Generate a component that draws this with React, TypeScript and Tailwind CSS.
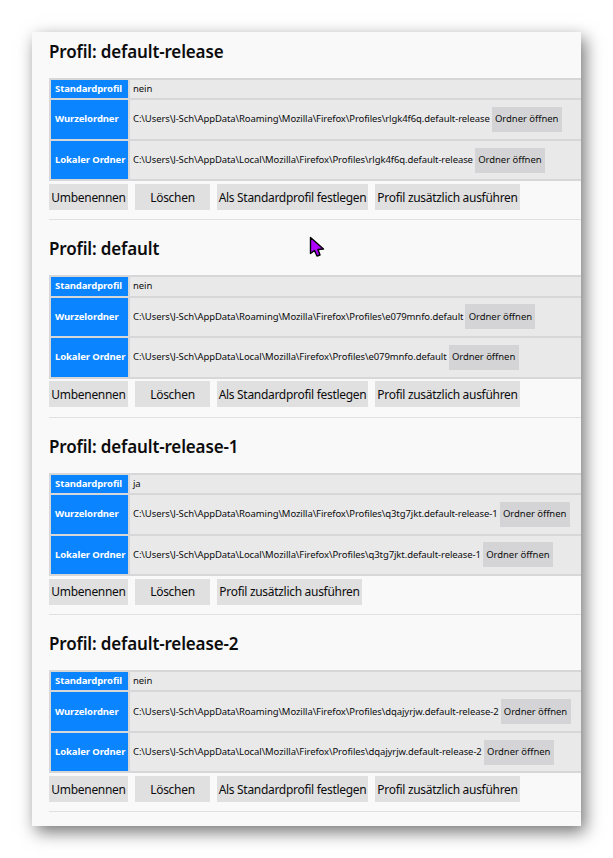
const FONT = "font-['Noto_Sans',sans-serif]";

interface Profile {
  name: string;
  isDefault: boolean;
  folder: string;
}

const PROFILES: Profile[] = [
  { name: "default-release", isDefault: false, folder: "rlgk4f6q.default-release" },
  { name: "default", isDefault: false, folder: "e079mnfo.default" },
  { name: "default-release-1", isDefault: true, folder: "q3tg7jkt.default-release-1" },
  { name: "default-release-2", isDefault: false, folder: "dqajyrjw.default-release-2" },
];

function Row({ label, height, children }: { label: string; height: string; children: React.ReactNode }) {
  return (
    <>
      <div className="flex items-center bg-[#0a84ff] pl-[4px] text-[9.5px] font-bold tracking-[-0.1px] whitespace-nowrap text-white">
        {label}
      </div>
      <div className={`flex items-center overflow-hidden bg-[#e9e9ea] pl-[3px] text-[9.5px] tracking-[-0.09px] whitespace-nowrap text-[#0c0c0d] ${height}`}>
        {children}
      </div>
    </>
  );
}

function PathRow({ label, path, height }: { label: string; path: string; height: string }) {
  return (
    <Row label={label} height={height}>
      <span>{path}</span>
      <button className="ml-[2px] h-[25px] w-[70px] shrink-0 bg-[#d4d4d6] text-[9.5px] tracking-[-0.05px] text-[#0c0c0d]">
        Ordner öffnen
      </button>
    </Row>
  );
}

function ActionButton({ label, width }: { label: string; width: string }) {
  return (
    <button className={`h-[25.9px] shrink-0 bg-[#e0e0e1] pt-px text-[12px] tracking-[-0.3px] whitespace-nowrap text-[#0c0c0d] ${width}`}>
      {label}
    </button>
  );
}

function ProfileSection({ profile }: { profile: Profile }) {
  return (
    <section className="h-[197.4px]">
      <h2 className="h-[46px] pt-[7px] text-[17px] leading-[26px] font-semibold tracking-[-0.15px] text-[#0c0c0d]">
        Profil: {profile.name}
      </h2>
      <div className="grid grid-cols-[77px_1fr] gap-[2px] bg-[#d7d7d9] py-[2px] pl-[2px]">
        <Row label="Standardprofil" height="h-[18.2px]">
          {profile.isDefault ? "ja" : "nein"}
        </Row>
        <PathRow label="Wurzelordner" height="h-[38.7px]" path={`C:\\Users\\J-Sch\\AppData\\Roaming\\Mozilla\\Firefox\\Profiles\\${profile.folder}`} />
        <PathRow label="Lokaler Ordner" height="h-[38.3px]" path={`C:\\Users\\J-Sch\\AppData\\Local\\Mozilla\\Firefox\\Profiles\\${profile.folder}`} />
      </div>
      <div className="mt-[2.9px] flex gap-[7px]">
        <ActionButton label="Umbenennen" width="w-[79px]" />
        <ActionButton label="Löschen" width="w-[75px]" />
        {!profile.isDefault && <ActionButton label="Als Standardprofil festlegen" width="w-[151px]" />}
        <ActionButton label="Profil zusätzlich ausführen" width="w-[145px]" />
      </div>
      <hr className="mt-[9.2px] border-t border-[#e0e0e1]" />
    </section>
  );
}

export default function App() {
  return (
    <div className={`h-[858px] w-[613px] overflow-hidden bg-white pt-[32px] pl-[32px] ${FONT}`}>
      <div className="relative h-[794px] w-[549px] overflow-hidden bg-[#f9f9f9] pl-[17px] shadow-[4px_6px_16px_rgba(0,0,0,0.55)] [clip-path:inset(-30px)]">
        {PROFILES.map((p) => (
          <ProfileSection key={p.name} profile={p} />
        ))}
        <svg className="absolute top-[204px] left-[277px]" width="17" height="22" viewBox="0 0 17 22">
          <path d="M1.5 1.5 L1.5 17.5 L5.5 14.5 L8 20 L11 19 L9 13.5 L14.5 13 Z" fill="#b000ff" stroke="#000" strokeWidth="1.4" strokeLinejoin="round" />
        </svg>
      </div>
    </div>
  );
}
